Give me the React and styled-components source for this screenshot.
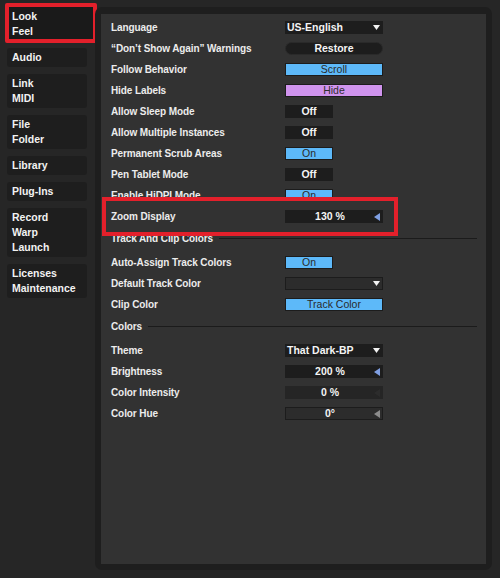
import React from "react";
import styled, { createGlobalStyle, css } from "styled-components";

const Global = createGlobalStyle`
  html, body { margin: 0; padding: 0; background: #262626; }
  body { font-family: "Liberation Sans", Arial, sans-serif; }
  * { box-sizing: border-box; }
`;

const Page = styled.div`
  display: flex;
  gap: 8px;
  padding: 7px 8px 8px 7px;
  width: 500px;
  height: 578px;
  background: #262626;
`;

const Sidebar = styled.nav`
  display: flex;
  flex-direction: column;
  gap: 7px;
  width: 80px;
  flex: none;
`;

const NavButton = styled.div`
  background: #1e1e1e;
  border-radius: 3px;
  padding: 2px 5px;
  color: #f2f2f2;
  font: 700 10.5px/15px "Liberation Sans", Arial, sans-serif;
  ${(p) =>
    p.$active &&
    css`
      background: #1a1a1a;
      border: 4px solid #e3202b;
      border-radius: 2px;
      padding: 2px 3px 0 3px;
      margin: -4px -10px -2px -2px;
    `}
`;

const Frame = styled.div`
  flex: 1;
  background: #1e1e1e;
  border-radius: 7px;
  padding: 7px 6px 6px 6px;
  display: flex;
`;

const Inner = styled.div`
  flex: 1;
  background: #323232;
  padding: 3px 9px 0 10px;
  display: flex;
  flex-direction: column;
`;

const Row = styled.div`
  display: grid;
  grid-template-columns: 174px auto;
  align-items: center;
  height: 21px;
`;

const Label = styled.span`
  color: #ececec;
  font: 700 10px/1 "Liberation Sans", Arial, sans-serif;
  letter-spacing: -0.1px;
  white-space: nowrap;
`;

const tones = {
  dark: css`
    background: #1d1d1d;
    border: 1px solid #1d1d1d;
    color: #f4f4f4;
    font-weight: 700;
  `,
  blue: css`
    background: #5db9f9;
    border: 1px solid #1c1c1c;
    color: #2a2a2a;
    font-weight: 400;
  `,
  purple: css`
    background: #d094ee;
    border: 1px solid #1c1c1c;
    color: #2f2f2f;
    font-weight: 400;
  `,
  outline: css`
    background: #2c2c2c;
    border: 1px solid #1c1c1c;
    color: #f4f4f4;
    font-weight: 700;
  `,
  faint: css`
    background: #252525;
    border: 1px solid #252525;
    color: #f4f4f4;
    font-weight: 700;
  `,
};

const Control = styled.div`
  width: ${(p) => (p.$narrow ? "48px" : "98px")};
  height: 13px;
  display: flex;
  align-items: center;
  justify-content: ${(p) => (p.$left ? "space-between" : "center")};
  padding: ${(p) => (p.$left ? "0 2px 0 1px" : "0")};
  font-family: "Liberation Sans", Arial, sans-serif;
  font-size: 10.5px;
  line-height: 1;
  white-space: nowrap;
  ${(p) => tones[p.$tone || "dark"]}
  ${(p) =>
    p.$pill &&
    css`
      border-radius: 7px;
      border-color: #2a2a2a;
    `}
`;

const ValueBox = styled(Control)`
  position: relative;
  justify-content: center;
  padding-right: 8px;
`;

const TriLeft = styled.svg`
  position: absolute;
  right: 2px;
  top: 2px;
`;

const Section = styled.div`
  display: flex;
  align-items: center;
  gap: 6px;
  height: 25px;
  padding-bottom: 2px;
`;

const SectionLine = styled.div`
  flex: 1;
  height: 1px;
  background: #1b1b1b;
  margin-top: -1px;
`;

const Highlight = styled.div`
  position: relative;
  z-index: 1;
  width: 296px;
  height: 39px;
  margin: -9px 0 -9px -9px;
  border: 4px solid #e3202b;
  background: #323232;
  padding: 5px 0 0 5px;
`;

const Down = () => (
  <svg width="7" height="5" viewBox="0 0 7 5">
    <polygon points="0,0 7,0 3.5,5" fill="#f2f2f2" />
  </svg>
);

const Left = ({ color }) => (
  <TriLeft width="6" height="8" viewBox="0 0 6 8">
    <polygon points="6,0 6,8 0,4" fill={color} />
  </TriLeft>
);

const Dropdown = ({ value, tone }) => (
  <Control $left $tone={tone}>
    <span>{value}</span>
    <Down />
  </Control>
);

const Value = ({ value, tone, tri }) => (
  <ValueBox $tone={tone}>
    <span>{value}</span>
    <Left color={tri} />
  </ValueBox>
);

const Setting = ({ label, children }) => (
  <Row>
    <Label>{label}</Label>
    <div>{children}</div>
  </Row>
);

export default function App() {
  return (
    <>
      <Global />
      <Page>
        <Sidebar>
          <NavButton $active>
            Look
            <br />
            Feel
          </NavButton>
          <NavButton>Audio</NavButton>
          <NavButton>
            Link
            <br />
            MIDI
          </NavButton>
          <NavButton>
            File
            <br />
            Folder
          </NavButton>
          <NavButton>Library</NavButton>
          <NavButton>Plug-Ins</NavButton>
          <NavButton>
            Record
            <br />
            Warp
            <br />
            Launch
          </NavButton>
          <NavButton>
            Licenses
            <br />
            Maintenance
          </NavButton>
        </Sidebar>
        <Frame>
          <Inner>
            <Setting label="Language">
              <Dropdown value="US-English" />
            </Setting>
            <Setting label="“Don’t Show Again” Warnings">
              <Control $pill>Restore</Control>
            </Setting>
            <Setting label="Follow Behavior">
              <Control $tone="blue">Scroll</Control>
            </Setting>
            <Setting label="Hide Labels">
              <Control $tone="purple">Hide</Control>
            </Setting>
            <Setting label="Allow Sleep Mode">
              <Control $narrow>Off</Control>
            </Setting>
            <Setting label="Allow Multiple Instances">
              <Control $narrow>Off</Control>
            </Setting>
            <Setting label="Permanent Scrub Areas">
              <Control $narrow $tone="blue">On</Control>
            </Setting>
            <Setting label="Pen Tablet Mode">
              <Control $narrow>Off</Control>
            </Setting>
            <Setting label="Enable HiDPI Mode">
              <Control $narrow $tone="blue">On</Control>
            </Setting>
            <Highlight>
              <Setting label="Zoom Display">
                <Value value="130 %" tri="#7f9fe2" />
              </Setting>
            </Highlight>
            <Section>
              <Label>Track And Clip Colors</Label>
              <SectionLine />
            </Section>
            <Setting label="Auto-Assign Track Colors">
              <Control $narrow $tone="blue">On</Control>
            </Setting>
            <Setting label="Default Track Color">
              <Dropdown value="" tone="outline" />
            </Setting>
            <Setting label="Clip Color">
              <Control $tone="blue">Track Color</Control>
            </Setting>
            <Section>
              <Label>Colors</Label>
              <SectionLine />
            </Section>
            <Setting label="Theme">
              <Dropdown value="That Dark-BP" />
            </Setting>
            <Setting label="Brightness">
              <Value value="200 %" tri="#7f9fe2" />
            </Setting>
            <Setting label="Color Intensity">
              <Value value="0 %" tone="faint" tri="#2c2c2c" />
            </Setting>
            <Setting label="Color Hue">
              <Value value="0°" tone="outline" tri="#8c8c8c" />
            </Setting>
          </Inner>
        </Frame>
      </Page>
    </>
  );
}
